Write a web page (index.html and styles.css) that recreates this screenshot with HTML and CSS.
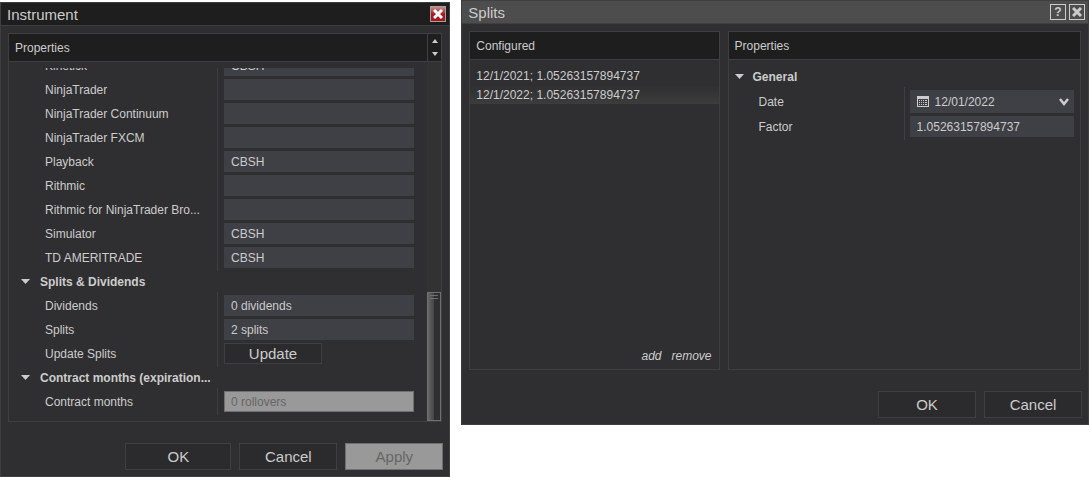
FILE: index.html
```html
<!DOCTYPE html>
<html lang="en">
<head>
  <meta charset="UTF-8">
  <title>Instrument</title>
  <link rel="stylesheet" href="styles.css">
</head>
<body>
  <div class="desktop">
    <section class="window instrument">
      <header class="title-bar">
        <h1>Instrument</h1>
        <button class="close-red" aria-label="Close">
          <svg width="10" height="10" viewBox="0 0 10 10"><path d="M1 1l8 8M9 1l-8 8" stroke="#fff" stroke-width="3"/></svg>
        </button>
      </header>
      <div class="window-body">
        <div class="panel">
          <div class="panel-header">
            <h2>Properties</h2>
            <div class="arrows">
              <button aria-label="Scroll up"><svg width="6" height="4" viewBox="0 0 6 4"><path d="M3 0l3 4H0z" fill="#ccc"/></svg></button>
              <button aria-label="Scroll down"><svg width="6" height="4" viewBox="0 0 6 4"><path d="M0 0h6L3 4z" fill="#ccc"/></svg></button>
            </div>
          </div>
          <div class="panel-content">
            <div class="scroll-list">
              <div class="group">
                <div class="row"><label for="kinetick">Kinetick</label><div class="cell"><input id="kinetick" type="text" value="CBSH"></div></div>
                <div class="row"><label for="ninja">NinjaTrader</label><div class="cell"><input id="ninja" type="text"></div></div>
                <div class="row"><label for="continuum">NinjaTrader Continuum</label><div class="cell"><input id="continuum" type="text"></div></div>
                <div class="row"><label for="fxcm">NinjaTrader FXCM</label><div class="cell"><input id="fxcm" type="text"></div></div>
                <div class="row"><label for="playback">Playback</label><div class="cell"><input id="playback" type="text" value="CBSH"></div></div>
                <div class="row"><label for="rithmic">Rithmic</label><div class="cell"><input id="rithmic" type="text"></div></div>
                <div class="row"><label for="rithmicNt">Rithmic for NinjaTrader Bro...</label><div class="cell"><input id="rithmicNt" type="text"></div></div>
                <div class="row"><label for="simulator">Simulator</label><div class="cell"><input id="simulator" type="text" value="CBSH"></div></div>
                <div class="row"><label for="td">TD AMERITRADE</label><div class="cell"><input id="td" type="text" value="CBSH"></div></div>
              </div>
              <h3><svg class="expander" width="9" height="5" viewBox="0 0 9 5"><path d="M0 0h9L4.500 5z" fill="#ccc"/></svg>Splits &amp; Dividends</h3>
              <div class="group">
                <div class="row"><label for="dividends">Dividends</label><div class="cell"><input id="dividends" type="text" value="0 dividends" readonly></div></div>
                <div class="row"><label for="splits">Splits</label><div class="cell"><input id="splits" type="text" value="2 splits" readonly></div></div>
                <div class="row"><label for="update">Update Splits</label><div class="cell"><button id="update" class="btn small">Update</button></div></div>
              </div>
              <h3><svg class="expander" width="9" height="5" viewBox="0 0 9 5"><path d="M0 0h9L4.500 5z" fill="#ccc"/></svg>Contract months (expiration...</h3>
              <div class="group">
                <div class="row"><label for="months">Contract months</label><div class="cell"><input id="months" type="text" value="0 rollovers" disabled></div></div>
              </div>
            </div>
            <div class="scroll-track"><div class="scroll-thumb"></div></div>
          </div>
        </div>
      </div>
      <footer class="buttons">
        <button class="btn wide">OK</button>
        <button class="btn">Cancel</button>
        <button class="btn" disabled>Apply</button>
      </footer>
    </section>

    <section class="window splits">
      <header class="title-bar">
        <h1>Splits</h1>
        <button class="tool" aria-label="Help">?</button>
        <button class="tool" aria-label="Close">
          <svg width="10" height="10" viewBox="0 0 10 10"><path d="M1 1l8 8M9 1l-8 8" stroke="#ccc" stroke-width="3"/></svg>
        </button>
      </header>
      <div class="window-body">
        <div class="panel configured">
          <div class="panel-header"><h2>Configured</h2></div>
          <ul class="items">
            <li>12/1/2021; 1.05263157894737</li>
            <li class="selected">12/1/2022; 1.05263157894737</li>
          </ul>
          <div class="links">
            <a href="#">add</a>
            <a href="#">remove</a>
          </div>
        </div>
        <div class="panel details">
          <div class="panel-header"><h2>Properties</h2></div>
          <div class="settings">
            <h3><svg class="expander" width="9" height="5" viewBox="0 0 9 5"><path d="M0 0h9L4.500 5z" fill="#ccc"/></svg>General</h3>
            <div class="group">
              <div class="row">
                <label for="date">Date</label>
                <div class="cell">
                  <div class="date-field">
                    <svg width="12" height="11" viewBox="0 0 12 11" shape-rendering="crispEdges">
                      <path d="M0 0h12v11H0z" fill="#ccc"/>
                      <path d="M1 3h10v7H1z" fill="#3f3f46"/>
                      <path d="M2 4h1v1H2zM4 4h1v1H4zM6 4h1v1H6zM8 4h2v1H8zM2 6h1v1H2zM4 6h1v1H4zM6 6h1v1H6zM8 6h2v1H8zM2 8h1v1H2zM4 8h1v1H4zM6 8h1v1H6zM8 8h2v1H8z" fill="#ccc"/>
                    </svg>
                    <select id="date"><option>12/01/2022</option></select>
                    <svg width="10" height="8" viewBox="0 0 10 8"><path d="M1 1l4 5 4-5" fill="none" stroke="#ccc" stroke-width="2.500"/></svg>
                  </div>
                </div>
              </div>
              <div class="row"><label for="factor">Factor</label><div class="cell"><input id="factor" type="text" value="1.05263157894737"></div></div>
            </div>
          </div>
        </div>
      </div>
      <footer class="buttons">
        <button class="btn">OK</button>
        <button class="btn">Cancel</button>
      </footer>
    </section>
  </div>
</body>
</html>
```
FILE: styles.css
```css
* {
  box-sizing: border-box;
}
body {
  margin: 0;
  background-color: #fff;
  font-family: "Liberation Sans", Arial, sans-serif;
  font-size: 12px;
  color: #ccc;
}
h1, h2, h3, ul {
  margin: 0;
  padding: 0;
}
button, input, select {
  font-family: inherit;
  color: inherit;
}
.desktop {
  display: flex;
  align-items: flex-start;
  gap: 11px;
  height: 100vh;
}
.window {
  display: flex;
  flex-direction: column;
  min-width: 0;
  background-color: #2f2f31;
  border: 1px solid #3f3f42;
}
.instrument {
  flex: 450;
  align-self: stretch;
  margin-top: 2px;
}
.splits {
  flex: 628;
}

.title-bar {
  display: flex;
  align-items: center;
  gap: 3px;
  height: 23px;
  padding: 0 3px 0 6px;
  background-color: #1e1e1e;
  border-bottom: 1px solid #3f3f42;
}
.title-bar h1 {
  flex: 1;
  font-size: 15px;
  font-weight: normal;
}
.splits .title-bar {
  background-color: #4d4d4d;
}
.close-red, .tool {
  display: flex;
  align-items: center;
  justify-content: center;
  width: 16px;
  height: 16px;
  padding: 0;
}
.close-red {
  background: linear-gradient(#c98a8c, #a81c22 50%, #a8161c);
  border: 1px solid #a0a0a0;
}
.tool {
  background: none;
  border: 1px solid #ccc;
  font-size: 12px;
  font-weight: bold;
}

.window-body {
  display: flex;
  flex: 1;
  gap: 8px;
  min-height: 0;
  padding: 7px 7px 0;
}
.panel {
  display: flex;
  flex-direction: column;
  flex: 1;
  min-width: 0;
  border: 1px solid #3f3f42;
}
.splits .panel {
  min-height: 339px;
}
.splits .configured {
  flex: 250;
}
.splits .details {
  flex: 354;
}
.panel-header {
  display: flex;
  align-items: center;
  height: 28px;
  background-color: #1e1e1e;
  border-bottom: 1px solid #3f3f42;
}
.panel-header h2 {
  flex: 1;
  padding-left: 6px;
  font-size: 12px;
  font-weight: normal;
}
.arrows {
  display: flex;
  flex-direction: column;
  align-self: stretch;
  width: 14px;
  border-left: 1px solid #3f3f42;
}
.arrows button {
  display: flex;
  flex: 1;
  align-items: center;
  justify-content: center;
  padding: 0;
  background: none;
  border: none;
}

.panel-content {
  display: flex;
  flex: 1;
  min-height: 0;
}
.scroll-list {
  display: flex;
  flex-direction: column;
  flex: 1;
  justify-content: flex-end;
  min-width: 0;
  margin: 6px 13px 6px 0;
  overflow: hidden;
}
.scroll-track {
  display: flex;
  flex-direction: column;
  justify-content: flex-end;
  width: 14px;
  background-color: #323232;
}
.scroll-thumb {
  height: 36%;
  background:
    linear-gradient(#707070, #707070) 2px 2px / 8px 1px no-repeat,
    linear-gradient(#707070, #707070) 2px 5px / 8px 1px no-repeat,
    linear-gradient(to right, #666, #444 6px, #2f2f31 6px);
  border: 1px solid #707070;
}

h3 {
  display: flex;
  flex: none;
  align-items: center;
  gap: 10px;
  height: 21px;
  padding-left: 12px;
  font-size: 12px;
  font-weight: bold;
}
.group {
  flex: none;
  display: flex;
  flex-direction: column;
}
.row {
  display: flex;
}
.row label {
  flex: none;
  display: flex;
  align-items: center;
  width: 208px;
  padding: 3px 0 0 36px;
  white-space: nowrap;
}
.row .cell {
  flex: 1;
  min-width: 0;
  padding: 3px 0 0 6px;
  border-left: 1px solid #3f3f42;
}
.row:last-child label,
.row:last-child .cell {
  padding-bottom: 3px;
}
.row input {
  display: block;
  width: 100%;
  height: 21px;
  padding: 0 7px;
  background-color: #3f3f46;
  border: none;
  font-size: 12px;
}
.row input:disabled {
  padding: 0 6px;
  background-color: #999;
  border: 1px solid #707070;
  color: #666;
}

.items {
  flex: 1;
  padding-top: 6px;
  list-style: none;
}
.items li {
  height: 19px;
  padding-left: 6px;
  line-height: 21px;
}
.items .selected {
  background: linear-gradient(#2f2f31, #3c3c3c);
}
.links {
  display: flex;
  justify-content: flex-end;
  gap: 10px;
  padding: 0 7px 6px;
}
.links a {
  color: inherit;
  font-style: italic;
  text-decoration: none;
}

.settings {
  padding: 6px 6px 0 0;
}
.settings h3 {
  gap: 9px;
  padding-left: 6px;
}
.settings .row label {
  width: 175px;
  padding-left: 30px;
}
.settings .cell {
  padding-left: 5px;
}
.date-field {
  display: flex;
  align-items: center;
  gap: 6px;
  height: 23px;
  padding: 0 5px 0 7px;
  background-color: #3f3f46;
}
.date-field select {
  flex: 1;
  min-width: 0;
  padding: 0;
  appearance: none;
  background: none;
  border: none;
  font-size: 12px;
}

.buttons {
  display: flex;
  justify-content: flex-end;
  gap: 8px;
  padding: 21px 6px 6px;
}
.btn {
  width: 98px;
  height: 27px;
  padding: 0;
  background-color: #2b2b2d;
  border: 1px solid #3f3f42;
  font-size: 15px;
}
.btn.wide {
  width: 106px;
}
.btn.small {
  display: block;
  height: 21px;
}
.btn:disabled {
  background-color: #999;
  border-color: #707070;
  color: #666;
}
```
